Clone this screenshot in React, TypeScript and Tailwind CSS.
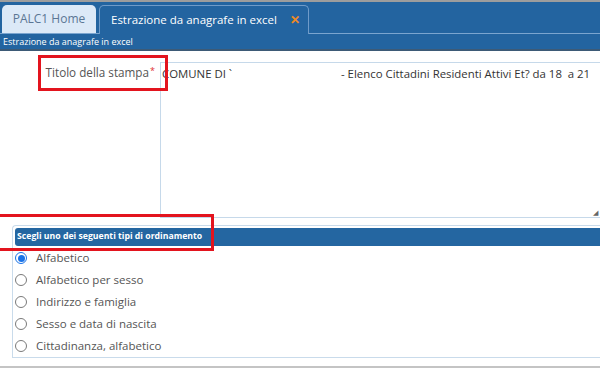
const options = [
  "Alfabetico",
  "Alfabetico per sesso",
  "Indirizzo e famiglia",
  "Sesso e data di nascita",
  "Cittadinanza, alfabetico",
];

function Radio({ checked }: { checked: boolean }) {
  return checked ? (
    <span className="flex h-[12px] w-[12px] items-center justify-center rounded-full border border-[#1a73e8] bg-white">
      <span className="h-[7px] w-[7px] rounded-full bg-[#1a73e8]" />
    </span>
  ) : (
    <span className="h-[12px] w-[12px] rounded-full border border-[#7a7a7a] bg-white" />
  );
}

export default function App() {
  return (
    <div className="relative h-[368px] w-[600px] overflow-hidden border-b-2 border-[#c4c4c4] bg-white font-['Open_Sans',sans-serif]">
      <header className="border-t-2 border-[#9d9d9d] bg-[#2364a0]">
        <div className="flex h-[32px] items-end gap-[3px] border-b border-[#7ba5cf] pl-[2px]">
          <div className="flex h-[28px] w-[94px] items-center justify-center whitespace-nowrap rounded-t-[5px] bg-[#dce9f7] text-[12px] text-[#5b7694]">
            PALC1 Home
          </div>
          <div className="-mb-px flex h-[29px] w-[210px] items-center justify-between whitespace-nowrap rounded-t-[5px] border border-b-0 border-[#6f9bc9] bg-[#2364a0] pl-[11px] pr-[8px] text-[11.5px] text-white">
            <span>Estrazione da anagrafe in excel</span>
            <span className="text-[12px] font-bold text-[#f08a24]">✕</span>
          </div>
        </div>
        <div className="flex h-[17px] items-center border-b-2 border-[#3d5a76] px-[3px] text-[9px] leading-none text-white">
          Estrazione da anagrafe in excel
        </div>
      </header>

      <div className="flex pt-[11px]">
        <div className="w-[160px] whitespace-nowrap pr-[5px] pt-[2px] text-right text-[11.7px] text-[#555]">
          Titolo della stampa<span className="relative -top-[3px] ml-[1px] text-[9px] text-[#e03030]">*</span>
        </div>
        <div className="relative h-[156px] flex-1 whitespace-nowrap border border-r-0 border-[#c6d9ea] pl-[1px] pt-[2px] text-[11.4px] text-[#333]">
          <span>COMUNE DI `</span>
          <span className="absolute left-[180px] top-[2px]">- Elenco Cittadini Residenti Attivi Et? da 18&nbsp; a 21</span>
          <span className="absolute bottom-[1px] right-[2px] text-[7px] leading-none text-[#666]">◢</span>
        </div>
      </div>

      <div className="ml-[12px] mt-[7px] rounded-tl-[4px] border border-r-0 border-[#c9dbeb] pl-[2px] pt-[2px]">
        <div className="flex h-[18px] items-center whitespace-nowrap rounded-l-[3px] bg-[#2466a1] pl-[2px] text-[8.7px] font-bold text-white">
          Scegli uno dei seguenti tipi di ordinamento
        </div>
        <div className="pt-[1px]">
          {options.map((o, i) => (
            <label key={o} className="flex h-[22px] items-center gap-[9px] text-[11.5px] text-[#555]">
              <Radio checked={i === 0} />
              <span>{o}</span>
            </label>
          ))}
        </div>
      </div>

      <div className="absolute left-[38px] top-[55px] h-[36px] w-[130px] border-[3px] border-[#e3141e]" />
      <div className="absolute left-[-3px] top-[214px] h-[37px] w-[217px] border-[3px] border-[#e3141e]" />
    </div>
  );
}
